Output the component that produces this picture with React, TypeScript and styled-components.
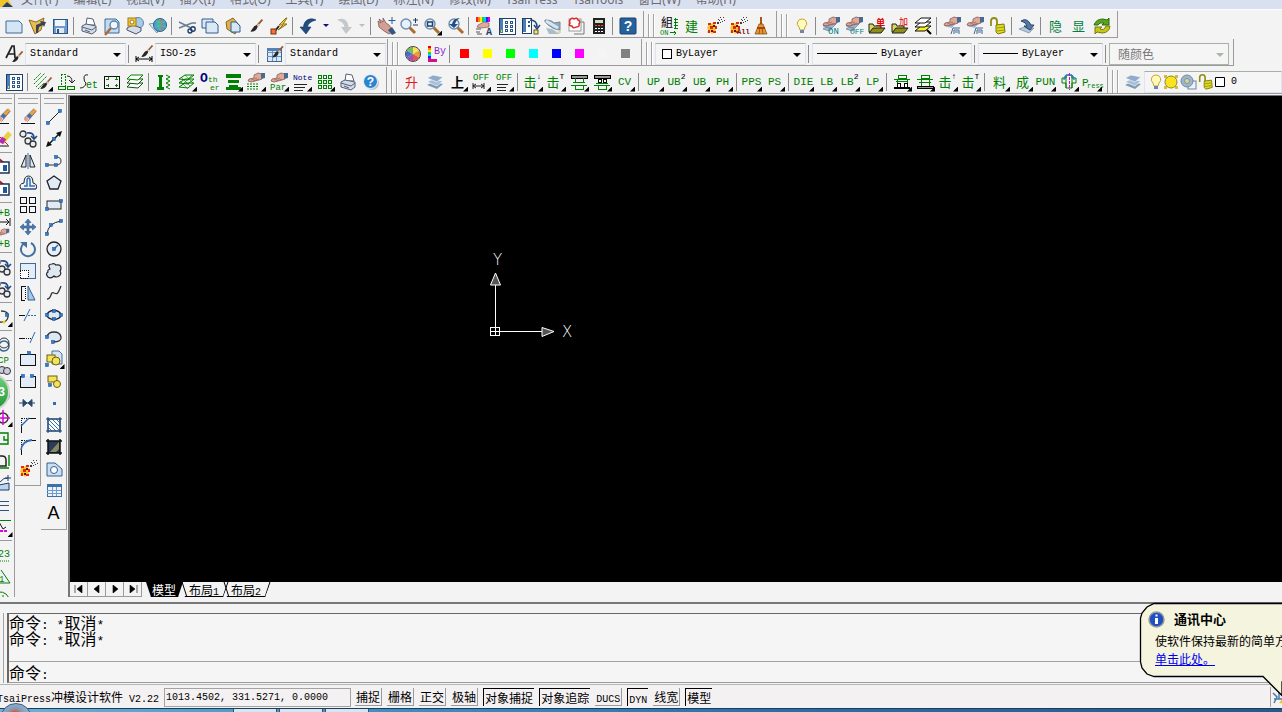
import React, { Fragment, ReactNode } from 'react';
import styled, { createGlobalStyle, css } from 'styled-components';

const GlobalStyle = createGlobalStyle`
  *, *::before, *::after { box-sizing: border-box; }
  body { margin: 0; background: #f3f3f4; }
  button, select, input { font: inherit; color: inherit; margin: 0; padding: 0; border: 0; background: none; }
`;

const mono = '"Liberation Mono", "Noto Sans CJK SC", monospace';
const sans = '"Noto Sans CJK SC", sans-serif';
const G = '#008000';
const NAVY = '#1d3f6b';
const BLUE = '#2f6db5';
const SKY = '#c3daf0';

/* ---------- shell ---------- */

const Shell = styled.div`
  position: relative;
  display: flex;
  flex-direction: column;
  height: 100vh;
  overflow: hidden;
  background: #f3f3f4;
  color: #000;
  font: 12px/16px ${sans};
`;

const MenuBar = styled.nav`
  display: flex;
  align-items: flex-end;
  gap: 15px;
  height: 10px;
  flex: none;
  overflow: hidden;
  padding-bottom: 1px;
  background: #d9e1f1;
  border-bottom: 1px solid #fbfbfb;
  color: #6b6b70;
  font-family: "Noto Sans", ${sans};
`;
const AppMark = styled.svg`
  width: 14px;
  height: 9px;
  margin-right: -8px;
  flex: none;
`;
const MenuItem = styled.button`
  flex: none;
  line-height: 16px;
  white-space: nowrap;
`;

const BarRow = styled.div`
  display: flex;
  flex: none;
  height: 28px;
`;
const Bar = styled.div<{ $first?: boolean; $grow?: boolean; $tight?: boolean }>`
  display: flex;
  align-items: center;
  flex: ${(p) => (p.$grow ? '1 0 auto' : 'none')};
  margin-top: 1px;
  padding: 3px ${(p) => (p.$grow ? 0 : p.$tight ? 1 : 4)}px 0 ${(p) => (p.$first ? 2 : 0)}px;
  border-right: ${(p) => (p.$grow ? 0 : 1)}px solid #9b9b9b;
  border-bottom: 1px solid #9b9b9b;
`;
const Grip = styled.i`
  align-self: stretch;
  width: 6px;
  margin: 0 3px 0 4px;
  border: solid #a3a3a3;
  border-width: 0 1px;
  box-shadow: inset 1px 0 #fff, 1px 0 #fff;
`;
const Sep = styled.i`
  width: 1px;
  height: 18px;
  margin: 0 3px 0 2px;
  background: #8b8b8b;
`;
const Tool = styled.button<{ $tall?: boolean }>`
  position: relative;
  display: flex;
  align-items: center;
  justify-content: center;
  flex: none;
  width: ${(p) => (p.$tall ? 24 : 23)}px;
  height: 22px;
  svg { width: 20px; height: 20px; overflow: visible; }
`;
const Flyout = styled.i`
  position: absolute;
  right: 1px;
  bottom: 1px;
  width: 5px;
  height: 5px;
  background: #000;
  clip-path: polygon(100% 0, 100% 100%, 0 100%);
`;
const Glyph = styled.span<{ $c?: string; $cn?: boolean; $b?: boolean }>`
  color: ${(p) => p.$c || G};
  font: ${(p) => (p.$b ? 'bold ' : '')}${(p) => (p.$cn ? '13px/20px ' + sans : '11px/20px ' + mono)};
  white-space: nowrap;
`;
const Sup = styled.sup`
  align-self: flex-start;
  margin-top: 2px;
  color: #000;
  font: 8px/8px ${mono};
`;
const DropArrow = styled.button<{ $c: string }>`
  display: flex;
  justify-content: center;
  width: 13px;
  &::before {
    content: '';
    border: 3px solid transparent;
    border-top-color: ${(p) => p.$c};
    border-bottom: 0;
  }
`;
const Swatch = styled.i<{ $c: string }>`
  width: 9px;
  height: 9px;
  background: ${(p) => p.$c};
`;

/* ---------- drop-downs ---------- */

const ComboBox = styled.label<{ $w?: number; $off?: boolean }>`
  position: relative;
  display: flex;
  align-items: center;
  gap: 4px;
  flex: ${(p) => (p.$w ? 'none' : '1')};
  width: ${(p) => (p.$w ? p.$w + 'px' : 'auto')};
  height: 22px;
  padding: 0 4px 0 ${(p) => (p.$off ? 8 : 4)}px;
  background: #f5f5f5;
  border: 1px solid ${(p) => (p.$off ? '#a9b5a9' : '#dfe5ee')};
  border-top-color: #a5b0a8;
  color: ${(p) => (p.$off ? '#777' : '#000')};
  select {
    flex: 1;
    min-width: 0;
    appearance: none;
    opacity: 1;
    color: inherit;
    font: ${(p) => (p.$off ? '12px/16px ' + sans : '10px/16px ' + mono)};
  }
`;
const Caret = styled.i<{ $c?: string }>`
  position: absolute;
  right: 4px;
  top: 9px;
  border: 4px solid transparent;
  border-top-color: ${(p) => p.$c || '#000'};
  border-bottom: 0;
  pointer-events: none;
`;
const ColorBox = styled.i`
  width: 10px;
  height: 10px;
  margin-left: 2px;
  flex: none;
  background: #fff;
  border: 1px solid #000;
`;
const Rule = styled.i<{ $w: number }>`
  width: ${(p) => p.$w}px;
  height: 1px;
  flex: none;
  background: #000;
`;

function Combo(p: { label: string; value: string; w?: number; off?: boolean; lead?: ReactNode }) {
  return (
    <ComboBox $w={p.w} $off={p.off}>
      {p.lead}
      <select aria-label={p.label} disabled={p.off}>
        <option>{p.value}</option>
      </select>
      <Caret $c={p.off ? '#a9b5a9' : undefined} />
    </ComboBox>
  );
}

/* ---------- icon drawings ---------- */

const px = { shapeRendering: 'crispEdges' as const };
const lens = (x: number, y: number, r = 5) => (
  <>
    <path d={`M${x + 3} ${y + 3}l6 6`} stroke="#b06a2c" strokeWidth="3" />
    <circle cx={x} cy={y} r={r} fill="#e6f1fb" stroke="#6f8fae" strokeWidth="1.4" />
  </>
);
const hand = (
  <>
    <path d="M8 3l4-2 4 1v5l-3 1-8 2-3-1 1-2 5-1z" fill="#e0a999" stroke="#7b4a44" strokeWidth=".7" />
    <path d="M5 8l6-2M7 9l6-2" stroke="#8d5a50" strokeWidth=".6" />
    <path d="M15 1h4v5l-4 1z" fill="#4a6a92" />
  </>
);
// filled sheets seen from above, without outlines between them
const sheets = (
  <>
    <path d="M2 13l6-3 10 2-6 5z" fill="#7d9ab8" />
    <path d="M2 10l6-3 10 2-6 5z" fill="#a9c0d6" stroke="#fff" strokeWidth=".6" />
    <path d="M2 6l6-3 10 2-6 5z" fill="#8fabc8" stroke="#fff" strokeWidth=".6" />
  </>
);
const brush = (
  <>
    <path d="M18 2l-8 9" stroke="#9b5b2c" strokeWidth="2.4" />
    <path d="M11 9l-3 1-5 7c4 1 8-2 9-6z" fill="#262626" />
    <path d="M12 8l2 2" stroke="#c9c9c9" strokeWidth="3" />
  </>
);
const lock = (
  <>
    <path d="M3 10V5q0-3 3-3t3 3v4" fill="none" stroke="#938c12" strokeWidth="1.8" />
    <path d="M8 9l8-1 1 8-7 2-2-2z" fill="#dede18" stroke="#7d7710" />
    <path d="M9 12l7-1M9 15l7-1" stroke="#98931a" />
  </>
);
const bulb = (
  <>
    <path d="M10 3a4.500 4.500 0 0 1 3 8l-1 3H8l-1-3a4.500 4.500 0 0 1 3-8z" fill="#fffbb8" stroke="#c9a13a" />
    <path d="M8 14h4v3H8z" fill="#6f86a6" />
  </>
);
const burst = (
  <>
    <path d="M3 8l2-1 1 1 3-2 1 3 2 1-2 2 1 3-2 1-2 2-2-2-3 1 1-3-1-2 1-2z" fill="#f9c62a" />
    <path {...px} d="M3 7h3v2H3zM8 6h3v2H8zM5 10h3v3H5zM10 10h2v3h-2zM3 14h2v3H3zM8 15h3v2H8z" fill="#e02818" />
    <path {...px} d="M8 9h2v2H8zM6 14h2v2H6z" fill="#5b1408" />
    <path {...px} d="M12 6h2v2h-2zM14 4h1v1h-1zM16 3h1v1h-1zM18 1h1v1h-1zM15 6h1v1h-1zM17 5h1v1h-1zM13 3h1v1h-1zM15 1h1v1h-1zM19 4h1v1h-1z" fill="#3d3d3d" />
  </>
);
const printer = (
  <>
    <path d="M7 9l1-7 6 1 2 6z" fill="#fff" stroke="#53617a" />
    <path d="M3 10l4-2 10 2v5l-4 3-10-3z" fill="#d6dde8" stroke="#53617a" />
    <path d="M3 11l10 3 4-3M6 14l5 2" fill="none" stroke="#53617a" />
  </>
);
const palette = (
  <g {...px}>
    <rect x="2" y="2" width="16" height="16" fill="#fff" stroke={NAVY} />
    <rect x="3" y="3" width="3" height="14" fill="#4d7db5" />
    <path d="M4 14h1v2h-1z" fill="#ffe000" />
    {[4, 8, 12].map((y) => (
      <g key={y} fill="none" stroke="#2c5587">
        <rect x="8" y={y + 1} width="2" height="2" />
        <rect x="13" y={y + 1} width="2" height="2" />
      </g>
    ))}
  </g>
);
const folder = (
  <>
    <path d="M2 16V8h4l1 2h7v6z" fill="#d8d860" stroke="#222" />
    <path d="M2 17l4-5h12l-4 5z" fill="#8f8f16" stroke="#222" />
  </>
);
const dot = (x: number, y: number) => <rect key={`${x}-${y}`} x={x - 1.5} y={y - 1.5} width="3" height="3" fill="#2d7bd0" stroke="#174b85" strokeWidth=".5" />;
const eraser = (
  <>
    <path d="M18 2l-8 9" stroke="#e8a33a" strokeWidth="4" />
    <path d="M12 8l-3 4" stroke="#3e73ae" strokeWidth="4.500" />
    <path d="M8 12l-3 4" stroke="#ec9a8c" strokeWidth="4" />
    <path d="M19 4l-11 13M16 1L4 13" stroke="#533" strokeWidth=".8" />
  </>
);
const t = (x: number, y: number, s: string, size = 8, fill = G, bold = false) => (
  <text x={x} y={y} fontSize={size} fill={fill} fontFamily='"Liberation Mono", "Noto Sans CJK SC", monospace' fontWeight={bold ? 700 : 400}>
    {s}
  </text>
);
const circlePair = (
  <>
    <circle cx="5" cy="5" r="3" fill="#e8eef5" stroke="#333" strokeWidth="1.300" />
    <circle cx="10" cy="12" r="3" fill="#e8eef5" stroke="#333" strokeWidth="1.300" />
    <circle cx="15" cy="15" r="3" fill="#e8eef5" stroke="#333" strokeWidth="1.300" />
    <path d="M9 4q7-1 7 5M13 7l3 3 3-3" fill="none" stroke="#244a80" strokeWidth="1.600" />
  </>
);

const art: Record<string, ReactNode> = {
  new: <path d="M2 5h13l3 3v9H2z" fill="#d4e6f6" stroke="#3f6a97" />,
  open: (
    <>
      <path d="M2 4l7 2 8-4-3 12-6 4z" fill="#e9bd54" stroke="#8d6a1e" />
      <path d="M9 17V9l5-2-1-2 6 1-2 5-1-2-4 2-1 6z" fill="#39424f" />
    </>
  ),
  save: (
    <g {...px}>
      <rect x="3" y="3" width="14" height="14" fill="#6f9ccb" stroke="#2b5688" />
      <rect x="5" y="4" width="10" height="6" fill="#f2f6fa" />
      <rect x="6" y="12" width="8" height="5" fill="#dfe7ef" />
      <rect x="7" y="13" width="2" height="4" fill="#2b5688" />
    </g>
  ),
  print: printer,
  preview: (
    <>
      <path d="M3 3h11l3 3v11H3z" fill={SKY} stroke="#3f6a97" />
      <path d="M9 12l-6 7" stroke="#a96a35" strokeWidth="2.500" />
      <circle cx="12" cy="9" r="4" fill="#eff6fc" stroke="#5e83a8" strokeWidth="1.400" />
    </>
  ),
  plot: (
    <>
      <circle cx="13" cy="7" r="5.500" fill="#a6cbe6" stroke="#5c87ab" />
      <path d="M2 12l6-3 8 3v3l-5 3-9-4z" fill="#d6dde8" stroke="#485569" />
      <rect x="3" y="2" width="8" height="8" fill="#f2c742" stroke="#a07a10" />
      <circle cx="7" cy="6" r="2" fill="#fff" stroke="#a07a10" />
    </>
  ),
  publish: (
    <>
      <path d="M1 8l6-1 4 4-2 6z" fill="#dce6f0" stroke="#7f97b0" />
      <circle cx="12" cy="9" r="6.500" fill="#4b9fd6" stroke="#25608f" />
      <path d="M8 5q6 3 9 0M7 11q5-3 11 0M12 3q-4 6 1 12" fill="none" stroke="#53c27f" strokeWidth="1.300" />
      <path d="M12 3q4 5 1 12" fill="none" stroke="#e26a4f" />
    </>
  ),
  cut: (
    <>
      <path d="M2 6l12 6M2 12l13-5" stroke="#6c7f93" strokeWidth="1.400" />
      <circle cx="16" cy="13" r="2.200" fill="none" stroke={NAVY} strokeWidth="1.400" />
      <circle cx="13" cy="15" r="2" fill="none" stroke={NAVY} strokeWidth="1.400" />
      <path d="M15 7h4" stroke={NAVY} />
    </>
  ),
  copy: (
    <g fill="#dbe9f6" stroke="#2f5f92">
      <path d="M2 3h11v9H2z" />
      <path d="M6 6h9l3 3v8H6z" />
    </g>
  ),
  paste: (
    <>
      <path d="M3 6l7-4 7 8-5 8-8-5z" fill="#ddb24d" stroke="#8a671d" />
      <path d="M8 6h5l4 4v6H8z" fill="#d7e6f5" stroke="#2f5f92" />
    </>
  ),
  brush: <g transform="translate(2 2) scale(.8)">{brush}</g>,
  match: (
    <>
      <path d="M17 2l-7 7h4l-5 5 9-6h-4l4-6z" fill="#f4cf2a" stroke="#8c6d0b" />
      <path d="M10 10l-4 5" stroke="#222" strokeWidth="2" />
      <rect x="2" y="13" width="5" height="5" fill="#f27235" stroke="#7a2f0c" />
    </>
  ),
  undo: <path d="M18 4C12 1 6 4 5.500 11H2l6 7 5-7H9.500q.5-5 8.500-7z" fill="#234c80" stroke="#16345b" strokeWidth=".6" />,
  redo: <path d="M3 4c6-3 11 0 11.500 7H18l-6 7-5-7h3.500Q10 6 3 4z" fill="#c3c8cc" />,
  pan: (
    <>
      <path d="M2 5l3 2-2-4 4 3 0-4 3 5 3 2 4 6-4 3-5-3-5-4z" fill="#d49f93" stroke="#6d4a4a" strokeWidth=".7" />
      <path d="M12 14l4-3 4 6-4 2z" fill="#35577f" />
      <path d="M16 1v7M12.500 4.500h7" stroke="#2e5c93" />
    </>
  ),
  zoomrt: (
    <>
      {lens(7, 8)}
      <path d="M14 4h5M16.500 2v5M14 9h5" stroke={NAVY} />
    </>
  ),
  zoomwin: (
    <>
      {lens(8, 8)}
      <rect x="5.500" y="6" width="5" height="4" fill="none" stroke={NAVY} strokeWidth="1.500" />
    </>
  ),
  zoomprev: (
    <>
      {lens(9, 8)}
      <path d="M15 2q-7 0-8 6H4l5 4 4-4h-3q1-4 5-6z" fill="#234c80" />
    </>
  ),
  props: (
    <>
      <g {...px}>
        {['#e22', '#f80', '#fe0', '#2c4', '#0cf', '#22f', '#d0d'].map((c, i) => (
          <rect key={c} x={2 + i * 2} y="1" width="2" height="5" fill={c} />
        ))}
      </g>
      <path d="M4 9l6-3 5 1v4l-8 1-4-1z" fill="#e0a999" stroke="#6d4a4a" strokeWidth=".6" />
      <path d="M2 13h5M2 16h4M3 18h5" stroke="#555" />
      {t(12, 19, 'A', 10, NAVY, true)}
    </>
  ),
  dc: palette,
  toolpal: (
    <>
      <g {...px}>
        <rect x="2" y="2" width="9" height="15" fill="#fff" stroke={NAVY} />
        <rect x="3" y="3" width="3" height="13" fill="#4d7db5" />
        <path d="M8 5h2v2h-2zM8 9h2v2h-2z" fill="#2c5587" />
      </g>
      <path d="M10 4q7 0 7 7M14 9l3 4 3-4" fill="none" stroke="#224a7d" strokeWidth="1.500" />
      <rect x="14" y="14" width="4" height="4" fill="#ffec50" stroke="#555" />
    </>
  ),
  sheetset: (
    <>
      <path d="M2 4q7 0 9 3l6-1v8q-7 0-15-8z" fill="#8fabbd" stroke="#70899a" />
      <path d="M3 5l12 7" stroke="#d9e6ee" strokeWidth="3" />
      <path d="M3 12l6 1 8 5H6z" fill="#a9bccb" />
      <path d="M12 17l6-3v3z" fill="#d9d9a0" />
    </>
  ),
  markup: (
    <>
      <path d="M5 6h13v12H8" fill="none" stroke="#777" />
      <rect x="3" y="3" width="12" height="12" fill="#fff" stroke="#999" />
      <path d="M4 4q2-3 4-1 3-2 4 1 3 1 1 4 1 3-3 3-3 2-4-1-4 0-2-3-1-2 0-3z" fill="#fff" stroke="#dd2a2a" strokeWidth="1.500" />
    </>
  ),
  calc: (
    <g {...px}>
      <rect x="4" y="2" width="12" height="16" fill="#222" />
      <rect x="6" y="4" width="8" height="3" fill="#cde3c0" />
      {[9, 12, 15].map((y) => (
        <path key={y} d={`M6 ${y}h2v1h-2zM9 ${y}h2v1h-2zM12 ${y}h2v1h-2z`} fill={y === 9 ? '#f44' : '#fff'} />
      ))}
    </g>
  ),
  help: (
    <>
      <rect x="2" y="2" width="16" height="16" rx="1" fill="#27619b" stroke="#164170" />
      <text x="10" y="15" textAnchor="middle" fontSize="14" fontWeight="700" fill="#fff" fontFamily='"Liberation Sans", sans-serif'>?</text>
    </>
  ),
  group: (
    <>
      <text x="2" y="11" fontSize="12" fill="#000" fontFamily='"Noto Sans CJK TC", sans-serif'>組</text>
      {t(1, 19, 'ON', 7)}
      <path d="M11 16.500h6M15 15l2 2-2 2" stroke={G} fill="none" />
      <path {...px} d="M15 3h4M15 6h4M15 9h4M15 12h4M16 2v11" stroke={G} />
    </>
  ),
  explode: burst,
  explodeAll: (
    <>
      {burst}
      {t(9, 18, 'All', 7, '#801010', true)}
    </>
  ),
  broom: (
    <>
      <path d="M10 1v8" stroke="#a5571a" strokeWidth="2" />
      <path d="M8 8h4l4 10H4z" fill="#e29a2f" stroke="#7a3f0c" strokeWidth=".7" />
      <path d="M6 12h8" stroke="#b02010" strokeWidth="1.500" />
      <path d="M9 11l-1 7M11 11l1 7" stroke="#8a3c0c" strokeWidth=".7" />
    </>
  ),
  bulb,
  layOn: (
    <>
      <path d="M2 10l4-3 9 1-4 4zM2 13l3-2 6 2-3 2z" fill="#9fb8d0" stroke="#57718e" strokeWidth=".6" />
      {hand}
      {t(7, 18, 'ON', 9, '#007f86')}
    </>
  ),
  layOff: (
    <>
      <path d="M2 10l4-3 9 1-4 4zM2 13l3-2 6 2-3 2z" fill="#9fb8d0" stroke="#57718e" strokeWidth=".6" />
      {hand}
      {t(6, 18, 'OFF', 8, '#007f86')}
    </>
  ),
  folder1: (
    <>
      {folder}
      {t(9, 10, '单', 9, '#e00000', true)}
    </>
  ),
  folder2: (
    <>
      {folder}
      {t(9, 9, '加', 9, '#e00000')}
    </>
  ),
  layersY: (
    <>
      <path d="M2 15l6-5h10l-6 5z" fill="#ffee20" stroke="#111" />
      <path d="M2 11l6-5h10l-6 5z" fill="#fff" stroke="#111" />
      <path d="M2 7l6-5h10l-6 5z" fill="#fff" stroke="#111" />
      <path d="M14 14l4 4" stroke="#000" strokeWidth="2" />
    </>
  ),
  layLock: (
    <>
      <path d="M2 10l4-3 7 1-3 4z" fill="#9fb8d0" />
      {hand}
      <path d="M9 18l2-6h7M12 18v-4h5v4M13 16h3" fill="none" stroke="#3f6591" />
    </>
  ),
  unlock: lock,
  layerPrev: (
    <>
      <path d="M2 13l5-2 6 3 4-2-5 5z" fill="#b6c8da" stroke="#5d7b9b" strokeWidth=".6" />
      <path d="M4 5q6-4 10 4h3l-4 5-6-4h3Q9 6 4 5z" fill="#5478a3" stroke="#29466a" />
    </>
  ),
  refresh: (
    <>
      <path d="M2 9q2-6 9-6l4 1 2-2v7h-7l2-2q-5-1-6 2z" fill="#58a320" stroke="#2d6b0d" />
      <path d="M18 10q-1 7-8 7l-5-1-2 2v-7h7l-2 2q4 2 6-3z" fill="#c3c817" stroke="#77790b" />
    </>
  ),
  styleText: (
    <>
      <path d="M2 14L8 2h2l1 12M4 10h7" fill="none" stroke="#222" strokeWidth="1.700" />
      <g transform="translate(6 6) scale(.7)">{brush}</g>
    </>
  ),
  styleDim: (
    <>
      <g transform="translate(5 0) scale(.75)">{brush}</g>
      <path d="M2 12v6M18 12v6M2 15h16M5 13l-3 2 3 2M15 13l3 2-3 2" fill="none" stroke="#000" />
    </>
  ),
  styleTable: (
    <>
      <g {...px}>
        <rect x="3" y="4" width="14" height="13" fill="#d9e8f7" stroke="#3f6a97" />
        <path d="M3 8h14M3 12h14M8 4v13M12 4v13" stroke="#6b93bd" />
        <rect x="3" y="4" width="14" height="3" fill="#5582b5" />
      </g>
      <g transform="translate(6 1) scale(.72)">{brush}</g>
    </>
  ),
  wheel: (
    <>
      {['#f5e35b', '#f09a3e', '#e2554e', '#a04fb5', '#3f6ed0', '#6fbf55'].map((c, i) => (
        <path key={c} d="M10 10L10 3A7 7 0 0 1 16.060 6.500z" fill={c} transform={`rotate(${i * 60} 10 10)`} />
      ))}
      <circle cx="10" cy="10" r="7.500" fill="none" stroke="#444" />
    </>
  ),
  byLayer: (
    <>
      <g {...px}>
        {['#e00', '#f80', '#fe0', '#2c4', '#0cf', '#22f', '#b0c'].map((c, i) => (
          <rect key={c} x="2" y={2 + i * 2} width="3" height="2" fill={c} />
        ))}
        <path d="M2 15h9v3H2z" fill="#d1108a" />
      </g>
      {t(8, 10, 'By', 10, '#8a1fd0')}
    </>
  ),
  gHatch: (
    <>
      <path d="M1 8l7-7M1 12L12 1M3 15L14 4M5 17l6-6" stroke={G} strokeDasharray="2 1" />
      <g transform="translate(5 4) scale(.75)">{brush}</g>
    </>
  ),
  gAngle: (
    <>
      <g {...px} fill="none" stroke={G}>
        <path d="M5 2h4v12H5z" strokeDasharray="2 1" />
        <path d="M2 14h7v3H2zM11 14h7v3h-7z" />
      </g>
      <path d="M11 4q5 0 5 6M13 8l3 3 3-3" fill="none" stroke="#222" />
    </>
  ),
  gSet: (
    <>
      <path d="M9 3Q5 2 5 6t2 5q-1 5-6 5" fill="none" stroke="#222" />
      {t(7, 16, 'et', 10)}
    </>
  ),
  gRect: (
    <g {...px} fill="none">
      <rect x="2" y="4" width="15" height="12" stroke="#111" />
      <path d="M4 7h3M6 5v3M13 7h3M14 5v3M4 13h3M6 12v3M13 13h3M14 12v3" stroke={G} />
    </g>
  ),
  gLayers: (
    <>
      <path d="M2 15l4-4h12l-5 5z" fill="#fff" stroke="#151" />
      <path d="M2 11l4-4h12l-5 5z" fill="#fff" stroke="#151" />
      <path d="M2 7l4-4h12l-5 5z" fill="#fff" stroke={G} />
    </>
  ),
  gBolt: (
    <>
      <path d="M4 3h5v2H8v10h2v3H3v-3h2V5H4z" fill={G} />
      <path d="M12 3l4 2-4 2 4 2-4 2 4 2-4 2 4 2" fill="none" stroke={G} />
    </>
  ),
  gNet: (
    <g fill="none" stroke={G}>
      <path d="M2 7l6-4h9l-6 5zM2 11l6-4h9l-6 5zM2 15l6-4h9l-6 5z" />
      <path d="M4 5l9 9M8 3l8 8M3 9l8 8M15 3L4 14" strokeWidth=".6" />
    </g>
  ),
  gOther: (
    <>
      {t(0, 10, 'O', 13, '#000080', true)}
      {t(8, 10, 'th', 8)}
      {t(10, 18, 'er', 8)}
    </>
  ),
  gBeam: (
    <path {...px} d="M3 2h15v4H3zM5 8h11v3H5zM6 13h9v2h3v3H3v-3h3z" fill={G} />
  ),
  gHandList: (
    <>
      {hand}
      <path d="M1 12h12M1 14.500h12M1 17h12" stroke={G} strokeDasharray="2 1" />
    </>
  ),
  gHandPar: (
    <>
      {hand}
      {t(1, 18, 'Par', 9)}
    </>
  ),
  gNote: (
    <>
      {t(1, 8, 'Note', 8, '#000080')}
      <path {...px} d="M2 12h13M2 15h11M2 18h9" stroke="#222" />
    </>
  ),
  gGrid: (
    <g {...px} fill="none" stroke={G}>
      {[3, 8, 13].map((y) => (
        <path key={y} d={`M3 ${y}h3v3h-3zM8 ${y}h3v3h-3zM13 ${y}h3v3h-3z`} />
      ))}
    </g>
  ),
  helpRound: (
    <>
      <circle cx="11" cy="11" r="7" fill="#bdc4cc" />
      <circle cx="9.500" cy="9.500" r="7" fill="#2d85cf" stroke="#eef5fb" />
      <text x="9.500" y="14" textAnchor="middle" fontSize="12" fontWeight="700" fill="#fff" fontFamily='"Liberation Sans", sans-serif'>?</text>
    </>
  ),
  layersB: sheets,
  off1: (
    <>
      {t(2, 8, 'OFF', 9)}
      <path d="M2 11v6M13 11v6M2 14h11M5 12l-3 2 3 2M10 12l3 2-3 2" fill="none" stroke="#222" />
    </>
  ),
  off2: (
    <>
      {t(2, 8, 'OFF', 9)}
      <path {...px} d="M3 12h11M3 15h9M3 18h9" stroke="#222" />
    </>
  ),
  die1: (
    <g {...px}>
      <path d="M2 3h16v3H2z" fill="#999" stroke="#000" />
      <path d="M6 6v4M14 6v4M4 10h12M2 13h16M6 13v4h8v-4" fill="none" stroke={G} />
    </g>
  ),
  die2: (
    <g {...px}>
      <path d="M2 3h16v3H2z" fill="#999" stroke="#000" />
      <path d="M6 7h3v3H6zM11 7h3v3h-3z" fill="#fff" stroke="#000" />
      <path d="M2 13h16M6 13v4h8v-4M4 11h12" fill="none" stroke={G} />
    </g>
  ),
  die3: (
    <g {...px}>
      <path d="M6 3h8v3H6zM2 7h16M4 9h12M5 7v4M15 7v4" fill="none" stroke={G} />
      <path d="M2 16h16" stroke="#000" strokeWidth="2" />
      <path d="M5 11h3v4H5zM12 11h3v4h-3z" fill="#fff" stroke="#000" />
    </g>
  ),
  die4: (
    <g {...px}>
      <path d="M6 3h8v3H6zM2 7h16M4 10h12M6 7v7M14 7v7" fill="none" stroke={G} />
      <path d="M2 14h16v2H2z" fill="#999" stroke="#000" />
    </g>
  ),
  slug: (
    <>
      <path d="M3 6h4V3h6v3h4v5h-4v5H7v-5H3zM7 3v13M13 3v13" fill="none" stroke={G} />
      <path d="M5 8q0-5 5-5t5 5" fill="none" stroke="#2f7fd0" strokeWidth="1.400" />
      <path {...px} d="M10 1v17" stroke="#e000e0" strokeDasharray="3 1" />
    </>
  ),
  pressMark: (
    <>
      {t(0, 14, 'P', 11)}
      {t(5, 16, 'ress', 7)}
    </>
  ),
  // modify palette
  erase: (
    <>
      <g transform="translate(3 1) scale(.8)">{eraser}</g>
      <path d="M3 16.500h14" stroke="#111" />
    </>
  ),
  circles: circlePair,
  mirror: (
    <>
      <path d="M8 4v12H3zM12 4v12h5z" fill="#dfe9f3" stroke="#222" />
      <path d="M10 2v16" stroke={BLUE} />
    </>
  ),
  offset: (
    <>
      <path d="M3 16q-3-5 3-6 0-7 4.500-7T15 10q5 1 3 6z" fill="#eef4fa" stroke="#222" />
      <path d="M6 13h3V8q0-3 1.500-3T12 8v5h5" fill="none" stroke={BLUE} strokeWidth="1.500" />
      <path d="M3 16h15" stroke={BLUE} />
    </>
  ),
  array: (
    <path {...px} d="M2 2h6v6H2zM11 2h6v6h-6zM2 11h6v6H2zM11 11h6v6h-6z" fill="#f4f8fc" stroke="#111" />
  ),
  move: (
    <path d="M10 2l3 3.500h-2V9h3.500V7L18 10l-3.500 3v-2H11v3.500h2L10 18l-3-3.500h2V11H5.500v2L2 10l3.500-3v2H9V5.500H7z" fill="#4b79ad" stroke="#2f5a8c" strokeWidth=".6" />
  ),
  rotate: (
    <>
      <path d="M6 4.500a7 7 0 1 0 7-.5" fill="none" stroke="#42709f" strokeWidth="2" />
      <path d="M2 3h7v6z" fill="#42709f" />
    </>
  ),
  scale: (
    <g {...px}>
      <rect x="2" y="2" width="15" height="15" fill="#e3edf7" stroke="#3f6a97" />
      <rect x="2" y="9" width="8" height="8" fill="#fff" stroke="#111" strokeDasharray="1 1" />
    </g>
  ),
  stretch: (
    <>
      <path d="M10 3l7 14h-7z" fill="#a9c8e6" stroke="#2f5f92" />
      <path {...px} d="M7 3H3v14h4" fill="none" stroke="#111" />
      <path {...px} d="M7 3v14" fill="none" stroke="#111" strokeDasharray="1 1" />
    </>
  ),
  trim: (
    <>
      <path {...px} d="M1 10h6" stroke="#111" />
      <path {...px} d="M10 10h8" stroke={BLUE} strokeDasharray="2 1" />
      <path d="M6 16l6-12" stroke={BLUE} />
    </>
  ),
  extend: (
    <>
      <path {...px} d="M1 11h6" stroke="#111" />
      <path {...px} d="M8 11h5" stroke="#111" strokeDasharray="1 1" />
      <path d="M12 16l5-11" stroke={BLUE} />
    </>
  ),
  breakPt: (
    <>
      <rect {...px} x="2" y="5" width="15" height="11" fill="#e3ecf6" stroke="#111" />
      {dot(11, 4)}
    </>
  ),
  breakGap: (
    <>
      <path {...px} d="M5 5H2v11h15V5h-3" fill="#e3ecf6" stroke="#111" />
      {dot(5, 5)}
      {dot(14, 5)}
    </>
  ),
  join: (
    <path d="M1 10h16M5 6.500l4 3.500-4 3.500zM14 6.500L10 10l4 3.500z" fill="#29496d" stroke="#29496d" />
  ),
  chamfer: (
    <>
      <path {...px} d="M3 18v-8M11 3h7" stroke="#111" fill="none" />
      <path {...px} d="M3 10V3h8" stroke="#111" fill="none" strokeDasharray="1 1" />
      <path d="M3 11l8-8" stroke={BLUE} strokeWidth="1.500" />
    </>
  ),
  fillet: (
    <>
      <path {...px} d="M3 18v-6M13 3h5" stroke="#111" />
      <path {...px} d="M3 10V3h8" stroke="#111" fill="none" strokeDasharray="1 1" />
      <path d="M3 13Q4 4 14 3" fill="none" stroke={BLUE} strokeWidth="1.800" />
    </>
  ),
  // draw palette
  line: (<><path d="M4 16L16 4" stroke="#222" />{dot(4, 16)}{dot(16, 4)}</>),
  xline: (
    <>
      <path d="M4 16L16 4" stroke="#111" strokeWidth="1.500" />
      <path d="M18 2l-2 6-4-4zM2 18l2-6 4 4z" fill="#111" />
      {dot(10, 10)}
    </>
  ),
  pline: (
    <>
      <path d="M3 14h9q5 0 5-4t-5-4" fill="none" stroke="#333" />
      {dot(3, 14)}{dot(12, 14)}{dot(12, 6)}
    </>
  ),
  polygon: <path d="M10 3l7 5-3 8H6L3 8z" fill="#e1ebf4" stroke="#223" strokeWidth="1.300" />,
  rect: (<><rect x="3" y="6" width="14" height="8" fill="#e1ebf4" stroke="#222" />{dot(3, 14)}{dot(17, 6)}</>),
  arc: (<><path d="M3 17Q4 6 17 4" fill="none" stroke="#222" />{dot(3, 17)}{dot(7, 8)}{dot(17, 4)}</>),
  circle: (
    <>
      <circle cx="10" cy="10" r="7" fill="#e6eff7" stroke="#222" strokeWidth="1.300" />
      <path d="M10 10l4-4" stroke={BLUE} strokeWidth="1.500" />
      {dot(10, 10)}
    </>
  ),
  cloud: <path d="M6 8Q3 3 8 3q2-1 4 1 5-1 5 3 0 2-1 3 2 3-1 5-3 2-5 0-3 3-6 1-3-3 0-5-1-2 2-3z" fill="#dfe7ef" stroke="#223" strokeWidth="1.200" />,
  spline: <path d="M3 16C8 16 6 8 10 10s4 0 7-7" fill="none" stroke="#333" strokeWidth="1.300" />,
  ellipse: (<><ellipse cx="10" cy="10" rx="7" ry="4.500" fill="#dce9f5" stroke="#223" strokeWidth="1.400" />{dot(3, 10)}{dot(17, 10)}{dot(10, 6)}{dot(10, 14)}</>),
  ellArc: (<><path d="M3 10q1-5 7-5t7 5-8 5" fill="#dce9f5" stroke="#333" strokeWidth="1.300" />{dot(3, 10)}{dot(9, 15)}</>),
  insBlock: (
    <>
      <path d="M8 2h7l3 3v10H8z" fill="#d7e6f4" stroke="#4a7199" />
      <rect x="3" y="6" width="8" height="7" fill="#f5e25a" stroke="#6b6310" />
      <circle cx="12" cy="12" r="4" fill="#f5e25a" stroke="#6b6310" />
      {dot(3, 16)}
    </>
  ),
  mkBlock: (
    <>
      <rect x="4" y="5" width="9" height="6" fill="#f5e25a" stroke="#6b6310" />
      <circle cx="13" cy="13" r="3.500" fill="#f5e25a" stroke="#6b6310" />
      {dot(6, 14)}
    </>
  ),
  point: <rect x="9" y="9" width="3" height="3" fill={BLUE} />,
  hatch: (
    <>
      <rect x="4" y="4" width="12" height="12" fill="#fff" stroke={NAVY} />
      <path d="M4 12l4 4M4 8l8 8M4 4l12 12M8 4l8 8M12 4l4 4" stroke={BLUE} />
      <path d="M2 4h16M2 16h16M4 2v16M16 2v16" stroke={NAVY} />
    </>
  ),
  gradient: (
    <>
      <rect x="4" y="4" width="12" height="12" fill="#2b3c58" />
      <path d="M6 15L15 5v7l-3 3z" fill="#8a8a62" />
      <path d="M2 4h16M2 16h16M4 2v16M16 2v16" stroke="#111" strokeWidth="1.500" />
    </>
  ),
  region: (
    <>
      <path d="M3 4h8l7 6v7H3z" fill="#c9dff2" stroke="#35618f" />
      <circle cx="10" cy="11" r="3.500" fill="#fff" stroke="#35618f" />
    </>
  ),
  table: (
    <g {...px}>
      <rect x="3" y="3" width="14" height="12" fill="#eaf2fb" stroke="#3e6fa6" />
      <rect x="3" y="3" width="14" height="3" fill="#3e6fa6" />
      <path d="M3 9h14M3 12h14M8 6v9M12 6v9" stroke="#6f9bc9" />
    </g>
  ),
  // press palette
  pen2: (
    <>
      <path d="M1 1l15 15M5 1l-4 6" stroke="#e01010" />
      <path d="M18 4l-8 9" stroke="#e8d23a" strokeWidth="5" />
      <path d="M12 9l-3 5" stroke="#b02bb0" strokeWidth="5" />
      <path d="M6 17h11" stroke="#111" />
    </>
  ),
  blk: (
    <>
      <path d="M7 2l5 4" stroke="#d01010" strokeWidth="2" />
      <rect x="4" y="5" width="13" height="11" fill="#fff" stroke="#1b3553" strokeWidth="1.500" />
      <rect x="11" y="8" width="4" height="6" fill="#1d5a9c" />
    </>
  ),
  plusB: (<>{t(6, 9, '+B', 10)}<path d="M6 15h11M14 12l3 3-3 3M18 11v8" stroke="#111" fill="none" /></>),
  handB: (<><g transform="translate(3 -1) scale(.75)">{hand}</g>{t(6, 18, '+B', 10)}</>),
  curve: (<><path d="M9 4q8 0 7 6t-8 5" fill="none" stroke="#333" strokeWidth="1.300" />{dot(15, 8)}<circle cx="12" cy="15" r="1.500" fill="#e9d400" /></>),
  rings: (<><circle cx="12" cy="11" r="5" fill="none" stroke="#35618f" strokeWidth="1.500" /><circle cx="12" cy="8" r="5" fill="none" stroke="#333" /></>),
  cp: (<>{t(6, 6, 'CP', 9)}<circle cx="10" cy="13" r="3.500" fill="#ccd" stroke="#333" /><circle cx="15" cy="14" r="3.500" fill="#ccd" stroke="#333" /></>),
  target: (<><circle cx="11" cy="11" r="5" fill="none" stroke="#333" strokeWidth="1.500" /><path d="M3 11h15M11 3v15" stroke="#e000e0" strokeWidth="1.500" /></>),
  lbox: <path d="M4 4h12v11H6v-4H4M12 7v4h4" fill="none" stroke={G} strokeWidth="1.400" />,
  gray2: (<><path d="M5 5h5q4 0 4 4v6H8" fill="none" stroke="#222" strokeWidth="1.500" /><path d="M17 4v11M5 17h12" stroke={G} strokeWidth="1.400" /></>),
  hill: (<><path d="M7 12l10-2v7H7z" fill="#bcd5ee" stroke={NAVY} /><path d="M8 9q4-5 8-4M16 2v6M13 5h6" fill="none" stroke={NAVY} /></>),
  rows: <path {...px} d="M4 6h13M4 10h13M4 15h13" stroke="#31507c" strokeWidth="1" />,
  magenta: (<><path {...px} d="M6 3h13" stroke={G} /><path d="M7 5l4 7 3-2" fill="none" stroke="#111" /><path d="M8 14h7" stroke="#e000e0" strokeWidth="2" strokeDasharray="3 1" /></>),
  n23: (<>{t(6, 12, '23', 10)}<path d="M6 16h12" stroke={G} strokeDasharray="1 1" /></>),
  tri1: (<><path d="M9 3l9 13H3" fill="none" stroke={G} />{t(7, 15, '1', 9)}</>),
  arc1: (<><path d="M6 3q10-1 12 10" fill="none" stroke={G} /><path d="M11 6v8" stroke={G} /></>),
};

const Icon = ({ name }: { name: string }) => (
  <svg viewBox="0 0 20 20" aria-hidden="true">{art[name]}</svg>
);

/* ---------- tool buttons ---------- */

type Item =
  | string
  | { g: string; c?: string; cn?: boolean; b?: boolean; sup?: string; more?: boolean }
  | { drop: string }
  | { sw: string };

// '|' is a separator; a trailing '+' marks a button that opens a flyout
function ToolItem({ item, tall }: { item: Item; tall?: boolean }) {
  if (item === '|') return tall ? <SideSep /> : <Sep />;
  if (typeof item === 'string') {
    const more = item.endsWith('+');
    const name = more ? item.slice(0, -1) : item;
    return (
      <Tool type="button" $tall={tall} aria-label={name}>
        <Icon name={name} />
        {more && <Flyout />}
      </Tool>
    );
  }
  if ('drop' in item) return <DropArrow type="button" $c={item.drop} aria-label="history" />;
  if ('sw' in item)
    return (
      <Tool type="button" aria-label={item.sw}>
        <Swatch $c={item.sw} />
      </Tool>
    );
  return (
    <Tool type="button">
      <Glyph $c={item.c} $cn={item.cn} $b={item.b}>{item.g}</Glyph>
      {item.sup && <Sup>{item.sup}</Sup>}
      {item.more && <Flyout />}
    </Tool>
  );
}
const Tools = ({ items, tall }: { items: Item[]; tall?: boolean }) => (
  <>{items.map((it, i) => <ToolItem key={i} item={it} tall={tall} />)}</>
);
const tx = (g: string, sup?: string): Item => ({ g, sup, more: true });
const cn = (g: string, sup?: string): Item => ({ g, sup, cn: true, more: true });

const standard: Item[] = ['new', 'open', 'save', '|', 'print', 'preview', 'plot', 'publish', '|', 'cut', 'copy', 'paste', 'brush', 'match', '|',
  'undo', { drop: '#101080' }, 'redo', { drop: '#b9bec4' }, '|', 'pan', 'zoomrt', 'zoomwin+', 'zoomprev', '|',
  'props', 'dc', 'toolpal', 'sheetset', 'markup', 'calc', '|', 'help'];
const groupTools: Item[] = ['group', { g: '建', cn: true }, 'explode', 'explodeAll', 'broom'];
const layerTools: Item[] = ['bulb', '|', 'layOn', 'layOff', 'folder1', 'folder2', 'layersY', '|', 'layLock', 'layLock', 'unlock', '|', 'layerPrev', '|',
  { g: '隐', cn: true, c: '#008040' }, { g: '显', cn: true, c: '#008040' }, 'refresh'];
const colorTools: Item[] = ['wheel', 'byLayer', '|', ...['#ff0000', '#ffff00', '#00ff00', '#00ffff', '#0000ff', '#ff00ff', '#f5f5f5', '#808080'].map((sw) => ({ sw }))];
const pressA: Item[] = ['dc', '|', 'gHatch+', 'gAngle', 'gSet', 'gRect', 'gLayers', '|', 'gBolt', 'gNet+', 'gOther', 'gBeam+', 'gHandList+', 'gHandPar+', 'gNote+', 'gGrid+', 'print', 'helpRound'];
const pressB: Item[] = [{ g: '升', cn: true, c: '#e01818' }, 'layersB', { g: '上', cn: true, c: '#000', b: true, more: true }, 'off1+', 'off2+', '|',
  cn('击', '↓'), cn('击', 'T'), 'die1+', 'die2+', tx('CV'), '|', tx('UP'), tx('UB', '2'), tx('UB'), tx('PH'), '|', tx('PPS'), tx('PS'), '|',
  tx('DIE'), tx('LB'), tx('LB', '2'), tx('LP'), '|', 'die3+', 'die4+', cn('击', '↑'), cn('击', 'T'), '|', cn('料'), cn('成'), tx('PUN'), 'slug+', 'pressMark+'];

const sideA: Item[] = ['erase', 'pen2', '|', 'blk', 'blk', '|', 'plusB', 'handB', '|', 'circles', 'circles', '|', 'curve+', '|', 'rings', 'cp', '|',
  'rings', 'target+', 'lbox', 'gray2', 'hill', 'rows', 'magenta+', '|', 'n23', 'tri1', 'arc1'];
const sideB: Item[] = ['erase', 'circles', 'mirror', 'offset', 'array', 'move', 'rotate', 'scale', 'stretch', 'trim', 'extend', 'breakPt', 'breakGap', 'join', 'chamfer', 'fillet', 'explode'];
const sideC: Item[] = ['line', 'xline', 'pline', 'polygon', 'rect', 'arc', 'circle', 'cloud', 'spline', 'ellipse', 'ellArc', 'insBlock+', 'mkBlock', 'point', 'hatch', 'gradient', 'region', 'table'];

/* ---------- work area ---------- */

const Work = styled.main`
  display: flex;
  flex: 1;
  min-height: 0;
`;
const Dock = styled.aside`
  position: relative;
  display: flex;
  align-items: flex-start;
  flex: none;
  height: 100%;
  margin-left: -11px;
  padding-right: 1px;
  overflow: hidden;
`;
const Side = styled.div<{ $full?: boolean }>`
  display: flex;
  flex-direction: column;
  align-items: center;
  flex: none;
  width: 26px;
  padding-bottom: 5px;
  border: solid #9b9b9b;
  border-width: 0 1px ${(p) => (p.$full ? 0 : 1)}px 0;
`;
const SideGrip = styled.i`
  width: 20px;
  height: 6px;
  margin: 4px 0 2px;
  border: solid #a3a3a3;
  border-width: 1px 0;
`;
const SideSep = styled.i`
  width: 20px;
  height: 1px;
  margin: 2px 0 3px;
  flex: none;
  background: #9b9b9b;
`;
const TextTool = styled.span`
  font: 18px/22px "Liberation Sans", sans-serif;
`;
const Ball = styled.span`
  position: absolute;
  left: -11px;
  top: 280px;
  width: 32px;
  height: 36px;
  padding-right: 3px;
  border: 2px solid #d5d5d5;
  border-radius: 50%;
  background: linear-gradient(#6ed07a, #1f9a38);
  color: #fff;
  font: bold 12px/32px "Liberation Sans", sans-serif;
  text-align: right;
`;
const View = styled.section`
  display: flex;
  flex-direction: column;
  flex: 1;
  min-width: 0;
  margin-top: 1px;
  border-left: 2px solid #777;
`;
const Canvas = styled.div`
  flex: 1;
  position: relative;
  overflow: hidden;
  background: #000;
  border-top: 1px solid #777;
`;
const Ucs = styled.svg`
  position: absolute;
  left: 410px;
  top: 150px;
  width: 110px;
  height: 100px;
`;
const TabRow = styled.div`
  display: flex;
  flex: none;
  height: 15px;
`;
const Step = styled.button`
  display: flex;
  align-items: center;
  justify-content: center;
  width: 18px;
  border: solid #9b9b9b;
  border-width: 0 1px 1px 0;
  svg { width: 10px; height: 8px; }
`;
const Tabs = styled.div`
  display: flex;
  margin-left: 4px;
`;
const Tab = styled.button<{ $on?: boolean }>`
  position: relative;
  height: 15px;
  padding: 0 6px;
  font: 12px/13px ${sans};
  white-space: nowrap;
  &::before, &::after {
    content: '';
    position: absolute;
    top: 0;
    bottom: 0;
    border-left: 1px solid #000;
  }
  &::before { left: 1px; transform: skewX(18deg); }
  &::after { right: -1px; transform: skewX(-18deg); }
  box-shadow: inset 0 -1px #000;
  clip-path: polygon(-4px 0, calc(100% + 4px) 0, calc(100% - 2px) 100%, 2px 100%);
  ${(p) => p.$on && css`
    background: #000;
    color: #fff;
    padding: 0 7px 0 6px;
    clip-path: polygon(0 0, 100% 0, calc(100% - 5px) 100%, 5px 100%);
  `}
`;

/* ---------- command window ---------- */

const CommandDock = styled.section`
  flex: none;
  padding-top: 5px;
`;
const Splitter = styled.div`
  height: 11px;
  border-top: 2px solid #777;
`;
const CommandFrame = styled.div`
  margin-left: 3px;
  padding-left: 3px;
  border-left: 1px solid #a3a3a3;
`;
const CommandBox = styled.div`
  border: solid #666;
  border-width: 1px 0 1px 2px;
  border-bottom-color: #9b9b9b;
  background: #f5f5f5;
  font: 16px/16px ${sans};
`;
const History = styled.div`
  height: 48px;
  border-bottom: 1px solid #a3a3a3;
`;
const Line = styled.div`
  white-space: pre;
`;
const Prompt = styled.label`
  display: flex;
  align-items: center;
  height: 20px;
  white-space: pre;
  input { flex: 1; outline: 0; }
`;
const Latin = styled.span<{ $big?: boolean }>`
  font-family: ${mono};
  font-size: ${(p) => (p.$big ? 13 : 10)}px;
  line-height: 0;
`;
// Half-width characters take the fixed-pitch face, at half the width of the ideographs
const Mixed = ({ text, big }: { text: string; big?: boolean }) => (
  <span>
    {text.split(/([\x20-\x7e]+)/).map((s, i) => (i % 2 ? <Latin key={i} $big={big}>{s}</Latin> : <Fragment key={i}>{s}</Fragment>))}
  </span>
);

/* ---------- status bar ---------- */

const Status = styled.footer`
  display: flex;
  align-items: center;
  flex: none;
  height: 24px;
  margin-top: 1px;
  padding-top: 1px;
  border-top: 1px solid #b5b5b5;
  background: #f4f1f2;
  white-space: pre;
`;
const Product = styled.span`
  margin-left: -3px;
`;
const Coords = styled.output`
  width: 187px;
  height: 19px;
  margin: 0 4px 0 5px;
  padding-left: 1px;
  border: 1px solid #a3a3a3;
  font: 10px/17px ${mono};
`;
const Toggle = styled.button<{ $on?: boolean }>`
  height: 18px;
  margin-right: 5px;
  padding: 0 1px;
  border: solid #9b9b9b;
  border-width: 0 1px 1px 0;
  line-height: 16px;
  ${(p) => p.$on && css`
    border-color: #000;
    border-width: 1px 0 0 1px;
  `}
`;
const Tray = styled.span`
  margin-left: auto;
  width: 12px;
  height: 20px;
  border-left: 1px solid #a3a3a3;
  overflow: hidden;
  svg { width: 18px; height: 20px; }
`;
const Taskbar = styled.div`
  position: relative;
  display: flex;
  gap: 2px;
  flex: none;
  height: 4px;
  padding-left: 233px;
  border-top: 1px solid #1d3c58;
  background: linear-gradient(90deg, #6fb0d8, #3f8fc2 30%, #2c6fa6 60%, #235a8d);
`;
const Task = styled.i`
  width: 44px;
  background: #d5e6f2;
  border: solid #31566f;
  border-width: 0 1px;
`;
const Orb = styled.i`
  position: absolute;
  left: 0;
  top: -6px;
  width: 32px;
  height: 32px;
  border: 1px solid #3b5b7c;
  border-radius: 50%;
  background: radial-gradient(circle at 14px 12px, #d8582c 4px, #7f9fc0 8px, #b9cde0);
`;

/* ---------- notification ---------- */

const Balloon = styled.div`
  position: absolute;
  right: 0;
  bottom: 14px;
  width: 143px;
  height: 96px;
  overflow: hidden;
`;
const BalloonShape = styled.svg`
  position: absolute;
  inset: 0;
  width: 100%;
  height: 100%;
`;
const BalloonBody = styled.div`
  position: relative;
  padding: 8px 0 0 16px;
  white-space: nowrap;
  h2 {
    display: flex;
    align-items: center;
    gap: 9px;
    margin: 0 0 4px -7px;
    font: bold 13px/18px ${sans};
  }
  h2 svg { width: 17px; height: 17px; }
  p { margin: 0; line-height: 18px; }
  a { color: #0000f0; line-height: 18px; display: block; }
`;

const menus = ['文件(F)', '编辑(E)', '视图(V)', '插入(I)', '格式(O)', '工具(T)', '绘图(D)', '标注(N)', '修改(M)', 'TsaiPress', 'TsaiTools', '窗口(W)', '帮助(H)'];
const toggles: [string, boolean][] = [['捕捉', false], ['栅格', false], ['正交', false], ['极轴', false], ['对象捕捉', true], ['对象追踪', true], ['DUCS', false], ['DYN', true], ['线宽', false], ['模型', true]];
const steps = ['M1 0v8M8 0L3 4l5 4z', 'M7 0L2 4l5 4z', 'M3 0l5 4-5 4z', 'M2 0l5 4-5 4zM9 0v8'];

const LayerState = styled.svg`
  width: 78px;
  height: 18px;
  flex: none;
`;

export default function App() {
  return (
    <Shell>
      <GlobalStyle />
      <MenuBar>
        <AppMark viewBox="0 0 14 9"><path d="M0 0h8l5 8H0z" fill="#efc52a" /><path d="M2 8l5-5 6 5z" fill="#2a3f63" /></AppMark>
        {menus.map((m) => <MenuItem key={m} type="button">{m}</MenuItem>)}
      </MenuBar>

      <BarRow>
        <Bar $first><Tools items={standard} /></Bar>
        <Bar><Grip /><Tools items={groupTools} /></Bar>
        <Bar><Grip /><Tools items={layerTools} /></Bar>
      </BarRow>
      <BarRow>
        <Bar $first $tight>
          <Tools items={['styleText']} />
          <Combo label="Text style" value="Standard" w={101} />
          <Sep />
          <Tools items={['styleDim']} />
          <Combo label="Dimension style" value="ISO-25" w={101} />
          <Sep />
          <Tools items={['styleTable']} />
          <Combo label="Table style" value="Standard" w={101} />
        </Bar>
        <Bar><Grip /><Tools items={colorTools} /></Bar>
        <Bar>
          <Grip />
          <Combo label="Color" value="ByLayer" w={151} lead={<ColorBox />} />
          <Sep />
          <Combo label="Linetype" value="ByLayer" w={160} lead={<Rule $w={60} />} />
          <Sep />
          <Combo label="Lineweight" value="ByLayer" w={125} lead={<Rule $w={35} />} />
          <Sep />
          <Combo label="Plot style" value="随颜色" w={120} off />
        </Bar>
      </BarRow>
      <BarRow>
        <Bar $first><Tools items={pressA} /></Bar>
        <Bar><Grip /><Tools items={pressB} /></Bar>
        <Bar $grow>
          <Grip />
          <Tools items={['layersB']} />
          <ComboBox>
            <LayerState viewBox="0 0 78 18" aria-hidden="true">
              <g transform="translate(-3 -1)">{bulb}</g>
              <path d="M15 2h3v3h-3zM26 2h3v3h-3zM15 13h3v3h-3zM26 13h3v3h-3z" fill="#d9b93a" />
              <circle cx="22" cy="9" r="6" fill="#ffe21e" stroke="#7b8f3a" />
              <rect x="39" y="8" width="8" height="8" fill="#eef3f8" stroke="#6d87a3" />
              <circle cx="38" cy="8" r="6" fill="#9fb5c8" stroke="#6f8aa5" />
              <circle cx="38" cy="8" r="2.500" fill="#dcd690" stroke="#7e93a8" />
              <g transform="translate(48 0) scale(.9)">{lock}</g>
              <path d="M66.500 4.500h9v9h-9z" fill="#fff" stroke="#000" />
            </LayerState>
            <select aria-label="Layer"><option>0</option></select>
          </ComboBox>
        </Bar>
      </BarRow>

      <Work>
        <Dock>
          <Side $full><SideGrip /><Tools tall items={sideA} /></Side>
          <Side><SideGrip /><Tools tall items={sideB} /></Side>
          <Side>
            <SideGrip />
            <Tools tall items={sideC} />
            <Tool type="button" $tall><TextTool>A</TextTool></Tool>
          </Side>
          <Ball>3</Ball>
        </Dock>
        <View>
          <Canvas>
            <Ucs viewBox="0 0 110 100" fill="none" stroke="#fff">
              <g shapeRendering="crispEdges">
                <path d="M15.500 90V38M11 85.500H62" />
                <rect x="10.500" y="81.500" width="9" height="8" />
              </g>
              <path d="M15.500 27l-5 12h10zM74 85.500l-12-4v9z" fill="#555" />
              <g fill="#fff" stroke="none" fontSize="15" fontFamily='"DejaVu Sans Light", "Liberation Sans", sans-serif'>
                <text x="13" y="19">Y</text>
                <text x="82" y="91">X</text>
              </g>
            </Ucs>
          </Canvas>
          <TabRow>
            {steps.map((d) => (
              <Step key={d} type="button" aria-label="scroll tabs"><svg viewBox="0 0 10 8"><path d={d} stroke="#000" strokeWidth=".6" /></svg></Step>
            ))}
            <Tabs>
              <Tab type="button" $on>模型</Tab>
              <Tab type="button"><Mixed text="布局1" /></Tab>
              <Tab type="button"><Mixed text="布局2" /></Tab>
            </Tabs>
          </TabRow>
        </View>
      </Work>

      <CommandDock>
        <Splitter />
        <CommandFrame>
          <CommandBox>
            <History>
              <Line><Mixed big text="命令: *取消*" /></Line>
              <Line><Mixed big text="命令: *取消*" /></Line>
            </History>
            <Prompt><Mixed big text="命令:" /><input type="text" aria-label="命令" /></Prompt>
          </CommandBox>
        </CommandFrame>
      </CommandDock>

      <Status>
        <Product><Mixed text="TsaiPress冲模设计软件 V2.22" /></Product>
        <Coords>1013.4502, 331.5271, 0.0000</Coords>
        {toggles.map(([name, on]) => (
          <Toggle key={name} type="button" $on={on} aria-pressed={on}><Mixed text={name} /></Toggle>
        ))}
        <Tray>
          <svg viewBox="0 0 18 20"><path d="M2 6l4 4-3 6M8 4v8M3 12h9" fill="none" stroke="#4c7ba9" strokeWidth="1.500" /><path d="M8 16l6-7v8z" fill="#f0c420" /></svg>
        </Tray>
      </Status>
      <Taskbar><Orb /><Task /><Task /><Task /></Taskbar>

      <Balloon role="status">
        <BalloonShape viewBox="0 0 143 96">
          <path d="M150 1.500H15L8 5 3 11 1.500 16V60L3 66l5 6 7 2.500H124l19 19V80h8z" fill="#f5f4df" stroke="#000" strokeWidth="1.300" />
        </BalloonShape>
        <BalloonBody>
          <h2>
            <svg viewBox="0 0 17 17" aria-hidden="true">
              <circle cx="8.500" cy="8.500" r="7.500" fill="#1f4fc0" stroke="#9a9a9a" strokeWidth="1.500" />
              <path d="M7 7h3v6H7zM7.500 3.500h2v2h-2z" fill="#fff" />
            </svg>
            通讯中心
          </h2>
          <p>使软件保持最新的简单方</p>
          <a href="#update">单击此处。</a>
        </BalloonBody>
      </Balloon>
    </Shell>
  );
}
